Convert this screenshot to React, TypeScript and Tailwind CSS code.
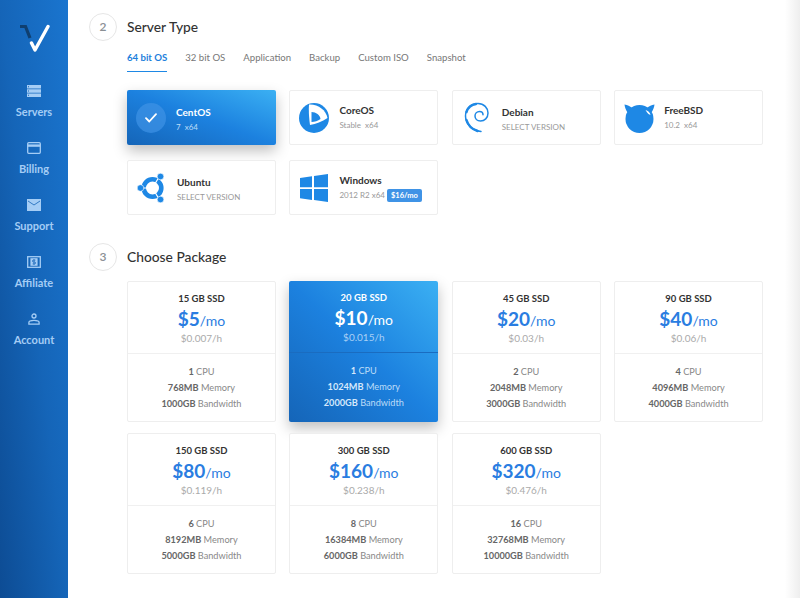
import { ReactNode } from 'react';

// ---- sidebar icons ----
const ServersIcon = () => (
  <svg width="14" height="12" viewBox="0 0 14 12" fill="currentColor">
    <path d="M0 0h14v3.4H0zM0 4.3h14v3.4H0zM0 8.6h14V12H0z" />
    <path d="M1 1.2h1v1H1zM1 5.5h1v1H1zM1 9.8h1v1H1z" fill="#1565b8" />
  </svg>
);

const BillingIcon = () => (
  <svg width="14" height="12" viewBox="0 0 14 12" fill="none" stroke="currentColor" strokeWidth="1.3">
    <rect x="0.7" y="0.7" width="12.6" height="10.6" rx="1" />
    <path d="M0.7 3.6h12.6" strokeWidth="2.4" />
  </svg>
);

const SupportIcon = () => (
  <svg width="14" height="12" viewBox="0 0 14 12" fill="currentColor">
    <path d="M0 0h14v12H0z" />
    <path d="M1 2l6 4 6-4" fill="none" stroke="#1565b8" strokeWidth="0.8" />
  </svg>
);

const AffiliateIcon = () => (
  <svg width="14" height="12" viewBox="0 0 14 12" fill="none" stroke="currentColor" strokeWidth="1.3">
    <rect x="0.7" y="0.7" width="12.6" height="10.6" />
    <rect x="3.4" y="2.2" width="7.2" height="7.6" fill="currentColor" stroke="none" />
    <path d="M8.4 4.1H6.4a.9.9 0 0 0 0 1.9h1.2a.9.9 0 0 1 0 1.9H5.6M7 3.2v5.6" stroke="#1565b8" strokeWidth="0.8" />
  </svg>
);

const AccountIcon = () => (
  <svg width="12" height="12" viewBox="0 0 12 12" fill="none" stroke="currentColor" strokeWidth="1.3">
    <circle cx="6" cy="3" r="2" />
    <path d="M0.9 11.2V9.6c0-1.4 2.6-2.2 5.1-2.2s5.1.8 5.1 2.2v1.6z" />
  </svg>
);

const NAV_ITEMS: { label: string; icon: ReactNode }[] = [
  { label: 'Servers', icon: <ServersIcon /> },
  { label: 'Billing', icon: <BillingIcon /> },
  { label: 'Support', icon: <SupportIcon /> },
  { label: 'Affiliate', icon: <AffiliateIcon /> },
  { label: 'Account', icon: <AccountIcon /> },
];

// ---- os logos ----
const CoreOSLogo = () => (
  <svg width="30" height="30" viewBox="0 0 30 30">
    <circle cx="15" cy="15" r="15" fill="#1e88e5" />
    <path d="M10 1.500C19 1 27 7 28.500 15 23 18.500 17 21 11 22 10 15 9.500 7 10 1.500z" fill="#fff" />
    <path d="M12.500 9C17 9 21 12 21.500 16 19 18 15.500 19 12.500 19z" fill="#1e88e5" />
  </svg>
);

const DebianLogo = () => (
  <svg width="26" height="31" viewBox="0 0 26 31" fill="none" stroke="#1e88e5" strokeLinecap="round">
    <path d="M17 29.500C8 28.500 1.500 22 1.500 14 1.500 6.500 7 1.500 14 1.500c6 0 10 4.500 10 9.500 0 5-3.500 8-7.500 8-3.500 0-5.500-2.500-5.500-5 0-2.500 2-4.500 4.500-4.500 2 0 3.500 1.500 3.500 3.200" strokeWidth="1.500" />
    <path d="M2.500 18c1.500 5 6 9.500 11 11M2.500 10C4 5.500 7.500 2.500 12 2" strokeWidth="2.400" />
  </svg>
);

const FreeBSDLogo = () => (
  <svg width="31" height="30" viewBox="0 0 31 30" fill="#1e88e5">
    <circle cx="15.500" cy="16" r="14" />
    <path d="M0.500 1.500c3 .5 5.500 1.800 7.500 3.500l-4.500 4.500C1.800 7 .8 4.300.5 1.500zM30.500 1.500c-.3 2.800-1.300 5.500-3 8L23 5c2-1.700 4.500-3 7.500-3.500z" />
    <path d="M21.500 7c2.500.5 4.500 2.500 5 5-1.500-.3-3-1.500-5-5z" fill="#fff" />
  </svg>
);

const UbuntuLogo = () => (
  <svg width="30" height="30" viewBox="0 0 30 30">
    <circle cx="15.500" cy="15" r="8.800" fill="none" stroke="#1e88e5" strokeWidth="4.600" />
    <path d="M15.500 15L6 15M15.500 15l6.500-11M15.500 15l6.500 11" stroke="#fff" strokeWidth="1.200" />
    <circle cx="3.500" cy="15" r="3.300" fill="#1e88e5" stroke="#fff" strokeWidth="0.600" />
    <circle cx="23.500" cy="3.500" r="3.300" fill="#1e88e5" stroke="#fff" strokeWidth="0.600" />
    <circle cx="23.500" cy="26.500" r="3.300" fill="#1e88e5" stroke="#fff" strokeWidth="0.600" />
  </svg>
);

const WindowsLogo = () => (
  <svg width="28" height="28" viewBox="0 0 28 28" fill="#1e88e5">
    <path d="M0 4l12-1.700v11H0zM14 2l14-2v13.300H14zM0 15h12v11L0 24.300zM14 15h14v13l-14-2z" />
  </svg>
);

const CheckBadge = () => (
  <div className="flex h-[30px] w-[30px] items-center justify-center rounded-full bg-[#3f93e6]/70">
    <svg width="12" height="10" viewBox="0 0 12 10" fill="none" stroke="#fff" strokeWidth="1.800" strokeLinecap="round" strokeLinejoin="round">
      <path d="M1 5.200l3.300 3.300L11 1.200" />
    </svg>
  </div>
);

// ---- data ----
const TABS = ['64 bit OS', '32 bit OS', 'Application', 'Backup', 'Custom ISO', 'Snapshot'];

const OS_LIST: { name: string; sub: string; logo: ReactNode; badge?: string; active?: boolean; low?: boolean }[] = [
  { name: 'CentOS', sub: '7  x64', logo: <CheckBadge />, active: true, low: true },
  { name: 'CoreOS', sub: 'Stable  x64', logo: <CoreOSLogo /> },
  { name: 'Debian', sub: 'SELECT VERSION', logo: <DebianLogo />, low: true },
  { name: 'FreeBSD', sub: '10.2  x64', logo: <FreeBSDLogo /> },
  { name: 'Ubuntu', sub: 'SELECT VERSION', logo: <UbuntuLogo />, low: true },
  { name: 'Windows', sub: '2012 R2 x64', logo: <WindowsLogo />, badge: '$16/mo' },
];

const PACKAGES = [
  { ssd: '15 GB SSD', price: '$5', hourly: '$0.007/h', cpu: '1', mem: '768MB', bw: '1000GB' },
  { ssd: '20 GB SSD', price: '$10', hourly: '$0.015/h', cpu: '1', mem: '1024MB', bw: '2000GB', active: true },
  { ssd: '45 GB SSD', price: '$20', hourly: '$0.03/h', cpu: '2', mem: '2048MB', bw: '3000GB' },
  { ssd: '90 GB SSD', price: '$40', hourly: '$0.06/h', cpu: '4', mem: '4096MB', bw: '4000GB' },
  { ssd: '150 GB SSD', price: '$80', hourly: '$0.119/h', cpu: '6', mem: '8192MB', bw: '5000GB' },
  { ssd: '300 GB SSD', price: '$160', hourly: '$0.238/h', cpu: '8', mem: '16384MB', bw: '6000GB' },
  { ssd: '600 GB SSD', price: '$320', hourly: '$0.476/h', cpu: '16', mem: '32768MB', bw: '10000GB' },
];

function Sidebar() {
  return (
    <aside className="flex w-[68px] shrink-0 flex-col items-center bg-gradient-to-tr from-[#0d4c94] via-[#1565b8] to-[#1a75cf]">
      <svg className="mt-[24px]" width="32" height="29" viewBox="0 0 32 29" fill="none">
        <path d="M2 2.500h5.500L12 14" stroke="#0f3f70" strokeWidth="3.200" />
        <path d="M13.500 19l3.500 7L30 2.500" stroke="#fff" strokeWidth="3.400" strokeLinecap="round" strokeLinejoin="round" />
      </svg>
      <nav className="mt-[32px] flex flex-col items-center gap-[29px]">
        {NAV_ITEMS.map((item) => (
          <div key={item.label} className="flex h-[28px] flex-col items-center text-[#a5cdf5]">
            <div className="flex h-[12px] items-center">{item.icon}</div>
            <span className="mt-[8px] text-[11px] leading-[14px] font-bold">{item.label}</span>
          </div>
        ))}
      </nav>
    </aside>
  );
}

function SectionHeader({ step, title }: { step: number; title: string }) {
  return (
    <div className="flex items-center">
      <div className="flex h-[28px] w-[28px] items-center justify-center rounded-full border border-[#e6e6e6] text-[12px] font-semibold text-[#8a8f94]">
        {step}
      </div>
      <h2 className="ml-[10px] text-[13.800px] leading-[20px] font-medium text-[#333]">{title}</h2>
    </div>
  );
}

function OsCard({ name, sub, logo, badge, active, low }: (typeof OS_LIST)[number]) {
  return (
    <div
      className={
        active
          ? 'flex h-[55px] items-center rounded-[2px] bg-gradient-to-tr from-[#1565b8] via-[#1c81df] to-[#3bb0f3] shadow-[0_6px_14px_rgba(0,0,0,0.25)]'
          : 'flex h-[55px] items-center rounded-[2px] border border-[#eeeeee] bg-white'
      }
    >
      <div className="flex w-[48px] shrink-0 justify-center">{logo}</div>
      <div className={`ml-[1px] ${low ? 'pt-[5px]' : ''}`}>
        <div className={`text-[10px] leading-[13px] font-bold ${active ? 'text-white' : 'text-[#333]'}`}>{name}</div>
        <div className={`mt-[2px] flex items-center whitespace-pre text-[8px] leading-[13px] ${active ? 'text-[#bcdcf8]' : 'text-[#999]'}`}>
          {sub}
          {badge && (
            <span className="ml-[2px] rounded-[2px] bg-[#3f93e6] px-[4px] text-[7.500px] font-bold text-white">{badge}</span>
          )}
        </div>
      </div>
    </div>
  );
}

function PackageCard({ ssd, price, hourly, cpu, mem, bw, active }: (typeof PACKAGES)[number]) {
  const strong = active ? 'font-bold text-[#d5e8fb]' : 'font-bold text-[#666]';
  return (
    <div
      className={
        active
          ? 'rounded-[2px] bg-gradient-to-tr from-[#1565b8] via-[#1c81df] to-[#3bb0f3] shadow-[0_6px_14px_rgba(0,0,0,0.25)]'
          : 'rounded-[2px] border border-[#eeeeee] bg-white'
      }
    >
      <div className={`flex h-[72px] flex-col items-center border-b pt-[10px] ${active ? 'border-[#1a6cc0]' : 'border-[#f0f0f0]'}`}>
        <div className={`text-[9.500px] leading-[13px] font-bold ${active ? 'text-white' : 'text-[#333]'}`}>{ssd}</div>
        <div className={`mt-[2px] flex items-baseline leading-[24px] ${active ? 'text-white' : 'text-[#2a7de1]'}`}>
          <span className="text-[19px] font-bold">{price}</span>
          <span className="text-[14px]">/mo</span>
        </div>
        <div className={`-mt-[1px] text-[10px] leading-[12px] ${active ? 'text-[#a9d0f5]' : 'text-[#aaa]'}`}>{hourly}</div>
      </div>
      <div className={`flex h-[67px] flex-col items-center gap-[3px] pt-[11px] text-[9.200px] leading-[13px] ${active ? 'text-[#bcdcf8]' : 'text-[#888]'}`}>
        <div><span className={strong}>{cpu}</span> CPU</div>
        <div><span className={strong}>{mem}</span> Memory</div>
        <div><span className={strong}>{bw}</span> Bandwidth</div>
      </div>
    </div>
  );
}

export default function App() {
  return (
    <div className="flex h-[598px] w-[800px] overflow-hidden bg-white font-['Lato','Open_Sans',sans-serif]">
      <Sidebar />
      <main className="flex-1 pt-[13px] pl-[21px]">
        <SectionHeader step={2} title="Server Type" />
        <div className="ml-[38px] w-[636px]">
          <div className="mt-[10px] flex gap-[18px] text-[9.600px] leading-[14px] text-[#777]">
            {TABS.map((tab, i) => (
              <div
                key={tab}
                className={
                  i === 0
                    ? 'border-b border-[#1e88e5] pb-[6px] font-bold text-[#1e7fdc]'
                    : 'pb-[6px]'
                }
              >
                {tab}
              </div>
            ))}
          </div>
          <div className="mt-[18px] grid grid-cols-4 gap-x-[13.500px] gap-y-[15px]">
            {OS_LIST.map((os) => (
              <OsCard key={os.name} {...os} />
            ))}
          </div>
        </div>
        <div className="mt-[28px]">
          <SectionHeader step={3} title="Choose Package" />
        </div>
        <div className="mt-[10px] ml-[38px] grid w-[636px] grid-cols-4 gap-x-[13.500px] gap-y-[11px]">
          {PACKAGES.map((pkg) => (
            <PackageCard key={pkg.ssd} {...pkg} />
          ))}
        </div>
      </main>
      <div className="w-[15px] shrink-0 bg-gradient-to-r from-white to-[#eeeeee]" />
    </div>
  );
}
